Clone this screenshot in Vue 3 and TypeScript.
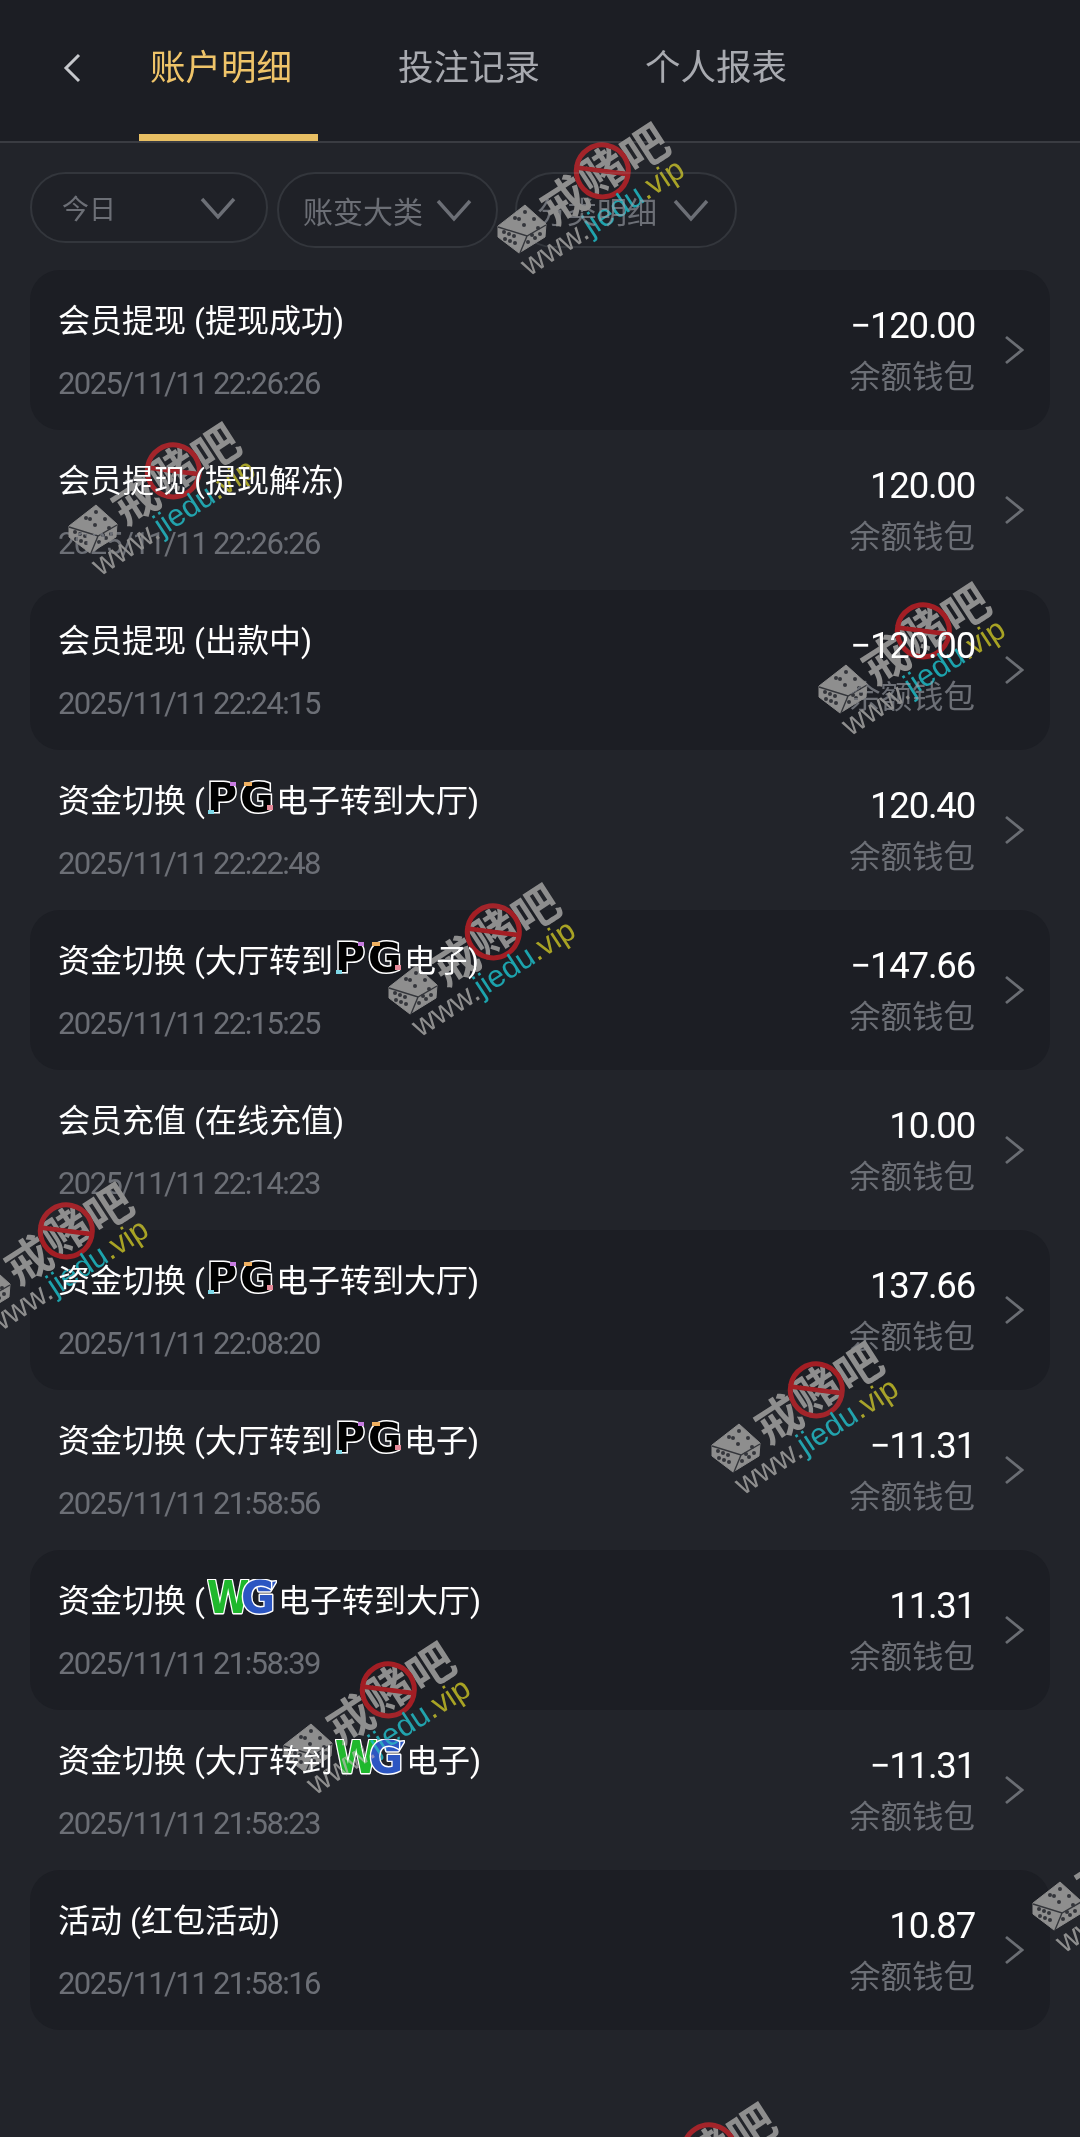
<script setup lang="ts">
type Logo = '' | 'pg' | 'wg'
interface Row {
  before: string
  logo: Logo
  after: string
  time: string
  amount: string
}

const rows: Row[] = [
  { before: '会员提现 (提现成功)', logo: '', after: '', time: '2025/11/11 22:26:26', amount: '−120.00' },
  { before: '会员提现 (提现解冻)', logo: '', after: '', time: '2025/11/11 22:26:26', amount: '120.00' },
  { before: '会员提现 (出款中)', logo: '', after: '', time: '2025/11/11 22:24:15', amount: '−120.00' },
  { before: '资金切换 (', logo: 'pg', after: '电子转到大厅)', time: '2025/11/11 22:22:48', amount: '120.40' },
  { before: '资金切换 (大厅转到', logo: 'pg', after: '电子)', time: '2025/11/11 22:15:25', amount: '−147.66' },
  { before: '会员充值 (在线充值)', logo: '', after: '', time: '2025/11/11 22:14:23', amount: '10.00' },
  { before: '资金切换 (', logo: 'pg', after: '电子转到大厅)', time: '2025/11/11 22:08:20', amount: '137.66' },
  { before: '资金切换 (大厅转到', logo: 'pg', after: '电子)', time: '2025/11/11 21:58:56', amount: '−11.31' },
  { before: '资金切换 (', logo: 'wg', after: '电子转到大厅)', time: '2025/11/11 21:58:39', amount: '11.31' },
  { before: '资金切换 (大厅转到', logo: 'wg', after: '电子)', time: '2025/11/11 21:58:23', amount: '−11.31' },
  { before: '活动 (红包活动)', logo: '', after: '', time: '2025/11/11 21:58:16', amount: '10.87' },
]

const filters = [
  { label: '今日', cls: 'pill-a' },
  { label: '账变大类', cls: 'pill-b' },
  { label: '分类明细', cls: 'pill-c' },
]

const tabs = ['账户明细', '投注记录', '个人报表']

const marks = [
  [522, 229], [93, 529], [843, 689], [413, 990], [-14, 1289],
  [736, 1448], [308, 1748], [1057, 1906], [629, 2209],
]

const markStyle = (m: number[]) => ({ left: `${m[0] - 60}px`, top: `${m[1] - 170}px` })

const dots = [
  [-7, -11], [3, -17], [12, -10], [2, -4], [-3, -10],
  [-18, 3], [-13, 5], [-8, 7], [-17, 10], [-12, 12], [-7, 14],
  [10, 6], [16, -1], [6, 13], [13, 9], [18, 5],
]
</script>

<template>
  <div class="page">
    <header class="head">
      <svg class="back" width="20" height="30" viewBox="0 0 20 30">
        <path d="M17 2 L4 15 L17 28" fill="none" stroke="#c6c8cc" stroke-width="3" />
      </svg>
      <div v-for="(t, i) in tabs" :key="t" class="tab" :class="{ on: i === 0 }">{{ t }}</div>
    </header>

    <div class="filters">
      <div v-for="f in filters" :key="f.label" class="pill" :class="f.cls">
        <span>{{ f.label }}</span>
        <svg width="36" height="24" viewBox="0 0 36 24">
          <path d="M2 3 L18 21 L34 3" fill="none" stroke="#6c6f76" stroke-width="3.4" />
        </svg>
      </div>
    </div>

    <div class="list">
      <div v-for="(r, i) in rows" :key="i" class="row" :class="{ card: i % 2 === 0 }">
        <div class="left">
          <div class="title">
            <span>{{ r.before }}</span>
            <svg v-if="r.logo === 'pg'" class="logo" width="69" height="38" viewBox="0 0 69 38">
              <g font-family="'DejaVu Sans'" font-weight="700" font-size="41" fill="#000" stroke="#fff" stroke-width="3" paint-order="stroke" stroke-linejoin="miter">
                <text x="1" y="33">P</text>
                <text x="34" y="33">G</text>
              </g>
              <rect x="2" y="31" width="6" height="4" fill="#7fd8e8" />
              <rect x="24" y="3" width="6" height="4" fill="#c77be0" />
              <rect x="38" y="3" width="8" height="4" fill="#f0b060" />
              <rect x="61" y="26" width="6" height="5" fill="#e88a9a" />
            </svg>
            <svg v-else-if="r.logo === 'wg'" class="logo" width="71" height="38" viewBox="0 0 73 38">
              <g font-family="'DejaVu Sans'" font-weight="700" stroke="#fff" stroke-width="3" paint-order="stroke" stroke-linejoin="round">
                <text transform="translate(1 34) scale(.86 1)" font-size="46" fill="#1fb82d">W</text>
                <polygon points="52,4 72,2 66,12 54,12" fill="#2c56c2" />
                <text transform="translate(36 34) scale(.93 1)" font-size="46" fill="#2c56c2">G</text>
              </g>
            </svg>
            <span>{{ r.after }}</span>
          </div>
          <div class="time">{{ r.time }}</div>
        </div>
        <div class="right">
          <div class="amount">{{ r.amount }}</div>
          <div class="wallet">余额钱包</div>
        </div>
        <svg class="go" width="20" height="32" viewBox="0 0 20 32">
          <path d="M2 3 L18 16 L2 29" fill="none" stroke="#6b6e74" stroke-width="2.8" />
        </svg>
      </div>
    </div>

    <svg v-for="(m, i) in marks" :key="'m' + i" class="mark" :style="markStyle(m)" width="280" height="240" viewBox="0 0 280 240">
      <g transform="translate(60 170)">
        <polygon points="3,-24 24,-5 23,8 -3,24 -24,8 -24,-3" fill="#8e8e8e" stroke="#8e8e8e" stroke-width="1" stroke-linejoin="round" />
        <path d="M-24,-2 L5,7 L24,-4 M5,7 L-2,24" fill="none" stroke="#34363b" stroke-width="1.4" />
        <circle v-for="(d, k) in dots" :key="k" :cx="d[0]" :cy="d[1]" r="2" fill="#34363b" />
        <g transform="rotate(-33)">
          <text class="cn" x="28" y="16">戒</text>
          <text class="cn" x="76" y="12">赌</text>
          <text class="cn" x="124" y="16">吧</text>
          <circle cx="99" cy="-5" r="26" fill="none" stroke="#a31417" stroke-width="5" />
          <line x1="79" y1="-22" x2="119" y2="12" stroke="#a31417" stroke-width="4.5" />
          <text class="en" x="-20" y="44"><tspan fill="#8e8e8e">www.</tspan><tspan fill="#14a3ad">jiedu</tspan><tspan fill="#a8a312">.vip</tspan></text>
        </g>
      </g>
    </svg>
  </div>
</template>

<style scoped>
.page {
  position: relative;
  width: 1080px;
  height: 2137px;
  overflow: hidden;
  background: #22242a;
  color: #fff;
  font-family: Roboto, "Noto Sans CJK SC", sans-serif;
}

.head {
  display: flex;
  align-items: flex-start;
  height: 141px;
  box-sizing: content-box;
  background: #1c1e24;
  border-bottom: 2px solid #3a3c42;
}

.back {
  margin: 53px 0 0 62px;
  flex: none;
}

.tab {
  margin-top: 45px;
  height: 89px;
  line-height: 46px;
  font-size: 35.5px;
  color: #a8aab0;
  box-sizing: content-box;
}

.tab.on {
  margin-left: 57px;
  width: 168px;
  padding-left: 11px;
  height: 89px;
  color: #efc469;
  border-bottom: 7px solid #e8bf63;
}

.tab:nth-of-type(2) {
  margin-left: 80px;
}

.tab:nth-of-type(3) {
  margin-left: 105px;
}

.filters {
  display: flex;
  align-items: flex-start;
  gap: 9px;
  padding: 29px 0 0 30px;
  height: 127px;
  box-sizing: border-box;
}

.pill {
  display: flex;
  align-items: center;
  justify-content: space-between;
  box-sizing: border-box;
  height: 76px;
  border: 2.5px solid #33363c;
  border-radius: 38px;
  background: #1f2127;
  color: #6c6f76;
  font-size: 30px;
}

.pill-a {
  width: 238px;
  height: 71px;
  padding: 0 30px 0 30px;
  font-size: 27px;
}

.pill-b {
  width: 221px;
  padding: 0 24px 0 24px;
}

.pill-c {
  width: 222px;
  margin-left: 8px;
  padding: 0 26px 0 20px;
}

.list {
  padding: 0 30px;
}

.row {
  display: flex;
  height: 160px;
  border-radius: 30px;
}

.card {
  background: #1c1e24;
}

.left {
  flex: 1;
  min-width: 0;
  padding: 26px 0 0 28px;
}

.title {
  display: flex;
  align-items: center;
  height: 44px;
  font-size: 32px;
  white-space: pre;
}

.logo {
  flex: none;
  margin: 0 1px 0;
}

.time {
  margin-top: 24px;
  line-height: 40px;
  font-size: 31px;
  letter-spacing: -1.6px;
  color: #6c6f76;
}

.right {
  padding-top: 34px;
  text-align: right;
}

.amount {
  line-height: 44px;
  font-size: 36.5px;
  letter-spacing: -1.2px;
}

.wallet {
  margin-top: 10px;
  line-height: 40px;
  font-size: 31.5px;
  color: #6c6f76;
}

.go {
  flex: none;
  margin: 64px 26px 0 29px;
}

.mark {
  position: absolute;
  mix-blend-mode: lighten;
  pointer-events: none;
}

.cn {
  font-family: "Noto Sans CJK SC", sans-serif;
  font-size: 46px;
  font-weight: 700;
  fill: #8e8e8e;
}

.en {
  font-family: "Liberation Sans", sans-serif;
  font-size: 31px;
}
</style>
